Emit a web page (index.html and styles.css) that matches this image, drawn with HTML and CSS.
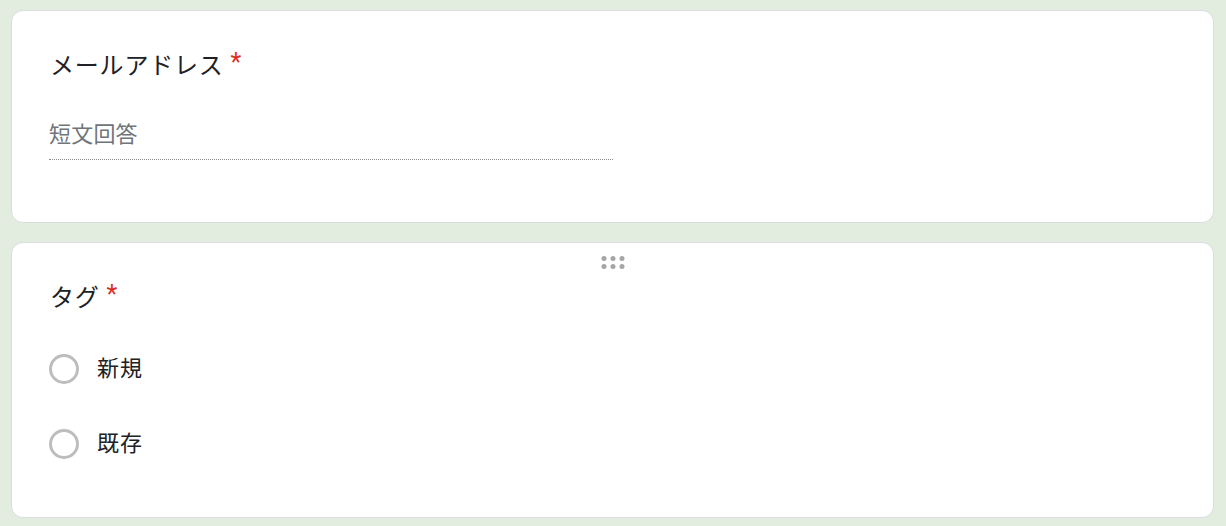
FILE: index.html
```html
<!DOCTYPE html>
<html lang="ja">
<head>
<meta charset="utf-8">
<title>フォーム</title>
<link rel="stylesheet" href="styles.css">
</head>
<body>
<main class="page">
  <section class="card">
    <div class="q-title">メールアドレス<span class="req">*</span></div>
    <div class="short-answer">
      <span class="placeholder">短文回答</span>
    </div>
  </section>
  <section class="card card-drag">
    <div class="drag-handle" aria-hidden="true">
      <span></span><span></span><span></span>
      <span></span><span></span><span></span>
    </div>
    <div class="q-title">タグ<span class="req">*</span></div>
    <div class="options">
      <label class="option"><span class="radio"></span><span class="opt-text">新規</span></label>
      <label class="option"><span class="radio"></span><span class="opt-text">既存</span></label>
    </div>
  </section>
</main>
</body>
</html>
```

FILE: styles.css
```css
html, body {
  margin: 0;
  padding: 0;
  background: #e2ede0;
}
body {
  font-family: "Noto Sans CJK JP", "Noto Sans", Roboto, sans-serif;
  color: #202124;
}
.page {
  display: flex;
  flex-direction: column;
  gap: 19px;
  padding: 10px 12px 0 11px;
}
.card {
  position: relative;
  background: #fff;
  border: 1px solid #dadce0;
  border-radius: 12px;
  padding: 35px 37px 36px 37px;
}
.q-title {
  font-size: 24px;
  line-height: 36px;
  letter-spacing: 0.8px;
  padding-left: 1px;
  color: #202124;
}
.req {
  font-family: Roboto, "Liberation Sans", sans-serif;
  font-size: 25px;
  color: #d93025;
  margin-left: 7px;
  letter-spacing: 0;
  line-height: 0;
  vertical-align: 3px;
}
.short-answer {
  width: 564px;
  margin-top: 35px;
  margin-bottom: 26px;
  padding-bottom: 12px;
  border-bottom: 1px dotted #8a8a8a;
}
.placeholder {
  display: block;
  font-size: 22px;
  line-height: 30px;
  letter-spacing: 0.2px;
  color: #70757a;
}
.drag-handle {
  position: absolute;
  top: 13px;
  left: 50%;
  transform: translateX(-50%);
  display: grid;
  grid-template-columns: repeat(3, 5px);
  grid-auto-rows: 5px;
  column-gap: 4px;
  row-gap: 3px;
}
.drag-handle span {
  width: 5px;
  height: 5px;
  border-radius: 50%;
  background: #a6a6a6;
}
.options {
  margin-top: 17px;
  display: flex;
  flex-direction: column;
}
.option {
  display: flex;
  align-items: center;
  height: 75px;
  gap: 18px;
}
.radio {
  width: 24px;
  height: 24px;
  border: 3px solid #bdbdbd;
  border-radius: 50%;
  flex: none;
}
.opt-text {
  font-size: 22px;
  line-height: 30px;
  letter-spacing: 1px;
  margin-bottom: 6px;
  color: #202124;
}
```
